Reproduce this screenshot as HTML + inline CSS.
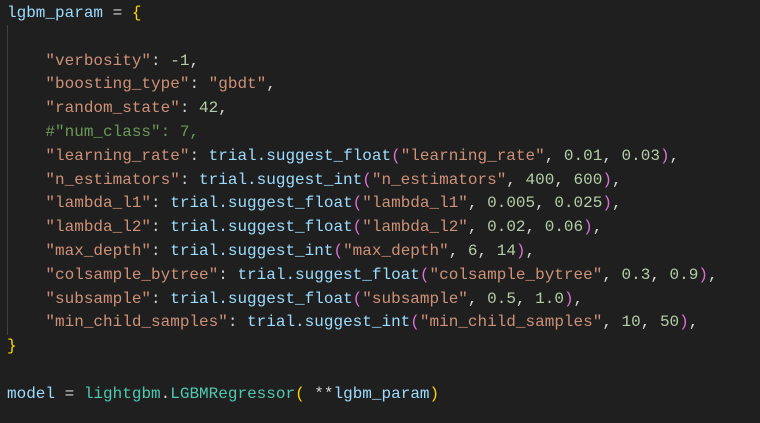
<!DOCTYPE html><html><head><style>
body{margin:0;background:#1f1f1f;width:760px;height:423px;overflow:hidden;position:relative}
pre{margin:0;position:absolute;left:7px;top:2px;font-family:"Liberation Mono",monospace;font-size:16px;line-height:23.8px;color:#d4d4d4}
.v{color:#9cdcfe}.s{color:#ce9178}.n{color:#b5cea8}.c{color:#6a9955}.y{color:#ffd700}.p{color:#da70d6}.t{color:#4ec9b0}
.g{position:absolute;left:7px;top:25px;width:1px;height:310px;background:#404040}
</style></head><body><div class="g"></div><pre><span class="v">lgbm_param</span> = <span class="y">{</span>

    <span class="s">"verbosity"</span>: <span class="n">-1</span>,
    <span class="s">"boosting_type"</span>: <span class="s">"gbdt"</span>,
    <span class="s">"random_state"</span>: <span class="n">42</span>,
    <span class="c">#"num_class": 7,</span>
    <span class="s">"learning_rate"</span>: <span class="v">trial.suggest_float</span><span class="p">(</span><span class="s">"learning_rate"</span>, <span class="n">0.01</span>, <span class="n">0.03</span><span class="p">)</span>,
    <span class="s">"n_estimators"</span>: <span class="v">trial.suggest_int</span><span class="p">(</span><span class="s">"n_estimators"</span>, <span class="n">400</span>, <span class="n">600</span><span class="p">)</span>,
    <span class="s">"lambda_l1"</span>: <span class="v">trial.suggest_float</span><span class="p">(</span><span class="s">"lambda_l1"</span>, <span class="n">0.005</span>, <span class="n">0.025</span><span class="p">)</span>,
    <span class="s">"lambda_l2"</span>: <span class="v">trial.suggest_float</span><span class="p">(</span><span class="s">"lambda_l2"</span>, <span class="n">0.02</span>, <span class="n">0.06</span><span class="p">)</span>,
    <span class="s">"max_depth"</span>: <span class="v">trial.suggest_int</span><span class="p">(</span><span class="s">"max_depth"</span>, <span class="n">6</span>, <span class="n">14</span><span class="p">)</span>,
    <span class="s">"colsample_bytree"</span>: <span class="v">trial.suggest_float</span><span class="p">(</span><span class="s">"colsample_bytree"</span>, <span class="n">0.3</span>, <span class="n">0.9</span><span class="p">)</span>,
    <span class="s">"subsample"</span>: <span class="v">trial.suggest_float</span><span class="p">(</span><span class="s">"subsample"</span>, <span class="n">0.5</span>, <span class="n">1.0</span><span class="p">)</span>,
    <span class="s">"min_child_samples"</span>: <span class="v">trial.suggest_int</span><span class="p">(</span><span class="s">"min_child_samples"</span>, <span class="n">10</span>, <span class="n">50</span><span class="p">)</span>,
<span class="y">}</span>

<span class="v">model</span> = <span class="t">lightgbm</span>.<span class="t">LGBMRegressor</span><span class="y">(</span> **<span class="v">lgbm_param</span><span class="y">)</span></pre></body></html>
